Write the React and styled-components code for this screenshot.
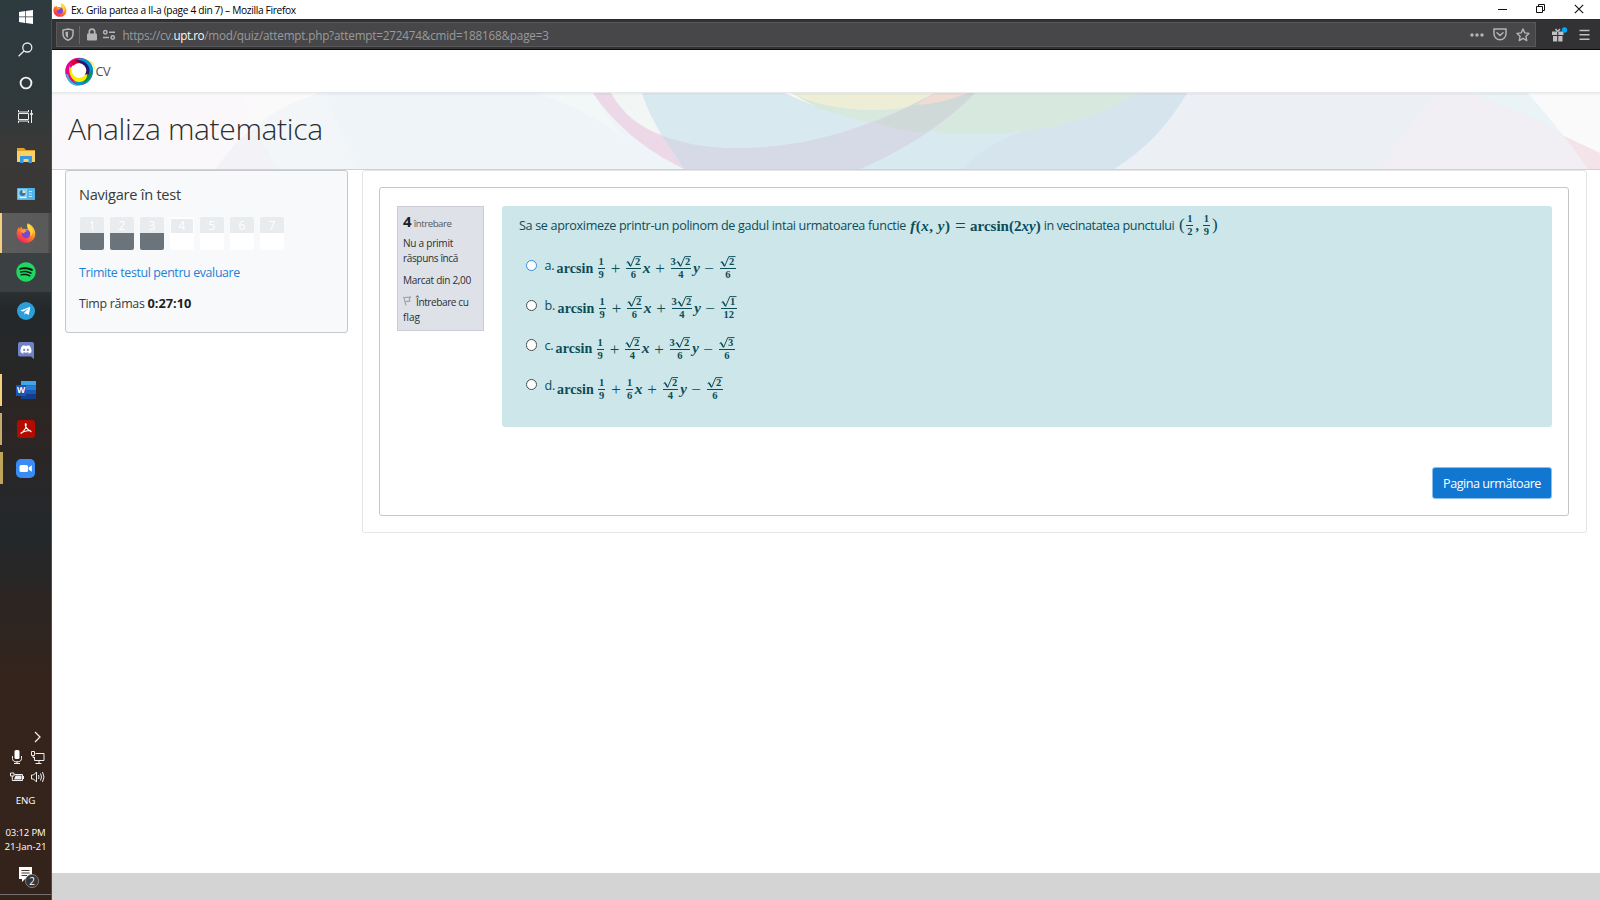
import React from "react";
import styled, { createGlobalStyle, css } from "styled-components";
import { FaSpotify, FaDiscord, FaTelegramPlane } from "react-icons/fa";

const Global = createGlobalStyle`
  * { box-sizing: border-box; }
  body { margin: 0; background: #fff; overflow: hidden; font-family: "Open Sans", "Noto Sans", sans-serif; color: #373a3c; }
`;

const Screen = styled.div`display: flex; width: 1600px; height: 900px; overflow: hidden;`;

const T = styled.span`
  white-space: pre;
  font-size: ${(p) => p.$s}px;
  letter-spacing: ${(p) => p.$ls || 0}px;
  font-weight: ${(p) => p.$b || 400};
  color: ${(p) => p.$c || "inherit"};
`;

/* ---------- taskbar ---------- */
const Taskbar = styled.aside`
  width: 52px; height: 900px; flex: none; display: flex; flex-direction: column;
  border-right: 1px solid #4c4c4c;
  background: linear-gradient(#2d3a3f 0, #2f393c 90px, #3a3938 150px, #3a3837 200px, #33393b 270px, #24282b 310px, #272727 370px, #2d2523 425px, #272729 490px, #23282b 530px, #2b2523 600px, #35241c 680px, #33231b 900px);
`;
const SysItem = styled.div`height: 33.3px; display: flex; align-items: center; justify-content: center; svg { display: block; }`;
const Apps = styled.div`padding-top: 2px; display: flex; flex-direction: column;`;
const AppItem = styled.div`
  height: 39.15px; flex: none; display: flex; align-items: center; justify-content: center;
  border-left: ${(p) => p.$bw || 0}px solid ${(p) => p.$bar || "transparent"};
  padding-right: ${(p) => p.$bw || 0}px;
  background: ${(p) => p.$bg || "transparent"};
  background-clip: padding-box;
  ${(p) => p.$short && css`height: 32px; margin: 3.6px 0;`}
  svg { display: block; }
`;
const Spacer = styled.div`flex: 1;`;
const Tray = styled.div`display: flex; flex-direction: column; height: 174px;`;
const TrayChevron = styled.div`height: 21px; padding: 5px 0 0 33px; svg { display: block; }`;
const TrayRow = styled.div`height: 20px; display: flex; align-items: center; justify-content: space-between; padding: 0 6px 0 10px; svg { display: block; }`;
const TrayText = styled.div`height: 14px; line-height: 14px; color: #fff; margin-top: ${(p) => p.$mt || 0}px; display: flex; justify-content: center;`;
const Notif = styled.div`margin-top: 13px; padding-left: 18px; height: 28px; border-bottom: 1px solid #77706c; svg { display: block; }`;

/* ---------- browser ---------- */
const Browser = styled.div`flex: 1; display: flex; flex-direction: column; min-width: 0;`;
const TitleBar = styled.div`
  height: 19px; display: flex; align-items: center; padding: 0 16px 0 1px; gap: 4px; color: #000; line-height: 18px;
  svg { display: block; flex: none; }
`;
const WinButtons = styled.div`margin-left: auto; display: flex; gap: 28px; align-items: center; height: 17px; padding-bottom: 2px;`;
const Toolbar = styled.div`height: 31px; background: #323234; border-top: 1px solid #2a2a2b; border-bottom: 1px solid #0c0c0d; display: flex; align-items: center; padding: 0 10px 0 4px;`;
const UrlField = styled.div`
  width: 1480px; height: 25px; background: #474749; border: 1px solid #58585a; display: flex; align-items: center; padding: 0 5px; color: #9a9a9c; line-height: 22px;
  svg { display: block; flex: none; }
`;
const Divider = styled.i`width: 1px; height: 18px; background: #68686b; margin: 0 6px 0 5px;`;
const Url = styled.div`margin-left: 6.5px; display: flex; flex: 1;`;
const UrlIcons = styled.div`display: flex; gap: 9px; align-items: center;`;
const ToolIcons = styled.div`display: flex; align-items: center; gap: 11px; margin-left: auto; svg { display: block; }`;

/* ---------- page ---------- */
const Nav = styled.div`height: 42px; display: flex; align-items: center; padding: 1px 0 0 12px; svg { display: block; } span { margin: -2px 0 0 -0.5px; }`;
const Banner = styled.header`
  height: 78px; border-top: 1px solid #e6e7e8; border-bottom: 1px solid #cfd1d3; display: grid; overflow: hidden;
  > * { grid-area: 1 / 1; }
  svg { display: block; }
`;
const Heading = styled.h1`margin: 0; padding: 12px 0 0 16px; line-height: 46px; font-weight: 300; color: #2b2e30; z-index: 1; height: 60px;`;
const Columns = styled.div`display: flex; align-items: flex-start; padding-left: 13px; gap: 14px; flex: 1;`;
const Block = styled.section`width: 283px; height: 163px; border: 1px solid #c6c8ca; border-radius: 3px; background: #f8f9fb; padding: 11px 13px; display: flex; flex-direction: column;`;
const Line = styled.div`height: ${(p) => p.$h}px; line-height: ${(p) => p.$h}px; margin-top: ${(p) => p.$mt || 0}px; display: flex; white-space: pre; align-items: baseline;`;
const NavButtons = styled.div`display: flex; gap: 6px; margin: 11px 0 0 1px; height: 33px; align-items: flex-end;`;
const QBtn = styled.div`
  width: 24px; height: 33px; display: flex; flex-direction: column; border-radius: 2px; overflow: hidden;
  ${(p) => p.$current && css`border: 1px solid #fff; border-top-width: 2px;`}
`;
const QNum = styled.div`height: ${(p) => (p.$current ? 14 : 16)}px; background: #e9ecef; color: #fff; font-size: 12px; line-height: ${(p) => (p.$current ? 14 : 18)}px; text-align: center;`;
const QState = styled.div`flex: 1; background: ${(p) => (p.$done ? "#6b737b" : "#fff")};`;

const Card = styled.main`width: 1225px; height: 363px; border: 1px solid #e3e5e7; border-radius: 3px; padding: 16px 17px 16px 16px;`;
const Inner = styled.div`height: 329px; border: 1px solid #c4c6c8; border-radius: 3px; padding: 18px 16px 16px 17px; display: grid; grid-template-columns: 87px 1fr; column-gap: 18px; grid-template-rows: 221px 1fr;`;
const Info = styled.div`height: 125px; border: 1px solid #cacdd5; background: #dee2e8; padding: 4px 0 0 5px; color: #2c2f33;`;
const Question = styled.div`background: #cde6ea; border-radius: 3px; color: #0c4c57; padding: 9px 0 0 17px;`;
const Stem = styled.div`height: 22px; display: flex; align-items: center; line-height: 22px; white-space: pre;`;
const Answers = styled.div`padding: 12px 0 0 6px;`;
const Answer = styled.div`height: 40.3px; display: flex; align-items: center;`;
const Radio = styled.i`width: 11.5px; height: 11.5px; border-radius: 50%; border: 1px solid ${(p) => (p.$active ? "#2a8fe8" : "#4c4c4f")}; background: #fff; margin: 0 7.5px ${(p) => p.$up}px 0.5px;`;
const Letter = styled.div`width: ${(p) => p.$w}px; margin-bottom: ${(p) => p.$up}px; line-height: 20px;`;
const Foot = styled.div`grid-column: 1 / 3; display: flex; justify-content: flex-end; align-items: flex-end;`;
const NextButton = styled.button`width: 120px; height: 32px; border: 1px solid #8dbdea; border-radius: 3px; background: #1177d1; color: #fff; font-family: inherit; padding: 0; display: flex; align-items: center; justify-content: center;`;
const StatusStrip = styled.footer`height: 27px; background: #d4d4d4; flex: none;`;

/* ---------- formulas ---------- */
const Formula = styled.div`display: flex; align-items: center; height: 26px; margin-left: ${(p) => p.$ml || 0}px; font-family: "Liberation Serif", serif; font-weight: 700; font-size: 14px; line-height: 14px;`;
const Sym = styled.span`
  width: ${(p) => p.$w}px; margin-left: ${(p) => p.$ml || 0}px; white-space: pre; display: flex; justify-content: center;
  font-size: ${(p) => p.$s || 14}px; font-style: ${(p) => (p.$i ? "italic" : "normal")}; font-weight: ${(p) => p.$b || 700};
  padding-bottom: ${(p) => p.$up || 0}px; letter-spacing: ${(p) => p.$ls || 0}px;
`;
const FracBox = styled.span`
  width: ${(p) => p.$w}px; margin-left: ${(p) => p.$ml || 0}px; display: flex; flex-direction: column; align-items: center; font-size: 10.5px; line-height: 10px;
`;
const Over = styled.span`height: 12px; width: 100%; display: flex; justify-content: center; align-items: flex-end; padding-bottom: 1px; border-bottom: 1px solid currentColor;`;
const Under = styled.span`height: 12px; padding-top: 1px; display: flex;`;
const RootSvg = styled.svg`display: block; width: 15.5px; height: 11px; flex: none;`;

const Root = ({ n }) => (
  <RootSvg viewBox="0 0 15.5 11">
    <path d="M.6 6.6 2 5.6 4.6 10.4 8.8.6H15.5" fill="none" stroke="currentColor" strokeWidth=".95" />
    <path d="M2 5.8 4.4 10" stroke="currentColor" strokeWidth="1.5" />
    <text x="9" y="9.4" fontSize="10.5" fontWeight="700" fill="currentColor" fontFamily="Liberation Serif, serif">{n}</text>
  </RootSvg>
);
const Frac = ({ a, b, r, w, ml }) => (
  <FracBox $w={w} $ml={ml}>
    <Over>{a}{r && <Root n={r} />}</Over>
    <Under>{b}</Under>
  </FracBox>
);

const ANSWERS = [
  { l: "a.", lw: 12, ru: 7, lu: 8, x: { r: 2, b: 6, w: 15.5 }, y: { a: 3, r: 2, b: 4, w: 20.5 }, z: { r: 2, b: 6 }, active: true },
  { l: "b.", lw: 13, ru: 8, lu: 8, x: { r: 2, b: 6, w: 15.5 }, y: { a: 3, r: 2, b: 4, w: 20.5 }, z: { r: 1, b: 12 } },
  { l: "c.", lw: 11, ru: 9, lu: 9, x: { r: 2, b: 4, w: 15.5 }, y: { a: 3, r: 2, b: 6, w: 20.5 }, z: { r: 3, b: 6 } },
  { l: "d.", lw: 12.5, ru: 11, lu: 10, x: { a: 1, b: 6, w: 7 }, y: { r: 2, b: 4, w: 15.5 }, z: { r: 2, b: 6 } },
];

const AnswerRow = ({ q }) => (
  <Answer>
    <Radio $active={q.active} $up={q.ru} />
    <Letter $w={q.lw} $up={q.lu}><T $s={12.6} $ls={-0.3}>{q.l}</T></Letter>
    <Formula>
      <Sym $w={37} $up={1} $ls={0.1}>arcsin</Sym>
      <Frac a="1" b="9" w={7} ml={4} />
      <Sym $w={10} $ml={6} $s={17} $b={400}>+</Sym>
      <Frac {...q.x} ml={5} />
      <Sym $w={8} $ml={1.5} $i $s={15.5} $up={2.5}>x</Sym>
      <Sym $w={10} $ml={4.5} $s={17} $b={400}>+</Sym>
      <Frac {...q.y} ml={5.5} />
      <Sym $w={8} $ml={1.5} $i $s={15} $up={2.5}>y</Sym>
      <Sym $w={10} $ml={3.5} $s={17} $b={400}>−</Sym>
      <Frac {...q.z} w={15.5} ml={6} />
    </Formula>
  </Answer>
);

/* ---------- drawings ---------- */
const Firefox = ({ s }) => (
  <svg width={s} height={s} viewBox="0 0 20 20">
    <defs>
      <linearGradient id="ff" x1=".85" y1="0" x2=".2" y2="1"><stop offset="0" stopColor="#ffe63d" /><stop offset=".4" stopColor="#ff9a26" /><stop offset=".75" stopColor="#ff4a3c" /><stop offset="1" stopColor="#e61f75" /></linearGradient>
    </defs>
    <path d="M12.3.3C16 2.4 19.6 6.4 19.3 11.5 18.9 16.6 14.8 19.8 10 19.8 4.6 19.8.6 15.8.6 10.7.6 7.5 1.7 5.6 3 3.9L3.6 6 5.6 3.6 6.3 6C8 5.5 10 5.6 11.5 6.3Z" fill="url(#ff)" />
    <circle cx="10" cy="11" r="4.3" fill="#7a45d8" />
    <path d="M4.8 8.2C6 6.7 8 6.5 9.6 7.3L11 8C9.8 8.9 8.2 9 8.2 10.4 7 10 5.5 9.5 4.8 8.2Z" fill="#ff9b2a" />
    <path d="M11.5.5C10.2 3.3 12 5.4 13.6 7.3 15 9 15 11.6 13.9 13.3 16.8 12 17.6 8.5 16.3 5.8 15.3 3.6 12.7 2.5 11.5.5Z" fill="#ffdc3a" />
  </svg>
);
const Swirl = () => (
  <svg width="32" height="32" viewBox="0 0 32 32">
    <circle cx="15" cy="15.5" r="11.3" fill="none" stroke="#ec008c" strokeWidth="5" />
    <path d="M7 6A13.5 13.5 0 0 1 24 5L20 9A9 9 0 0 0 9 10Z" fill="#e3002b" />
    <path d="M13 3C20 0 30 6 29 15A14 14 0 0 1 13 29L9 25C20 26 25 18 22 12 20 7 17 5 13 3Z" fill="#0097cf" />
    <path d="M11 4.5C21 3 27.5 10 25 18 23 21 20 22 18 23 24 16 20 8 11 4.5Z" fill="#28166f" />
    <path d="M19 24C23 22 26 18 28 13 29 19 25 25 19 27Z" fill="#009246" />
    <path d="M23 4C28 4 32 9 30.5 14 30 9 27 6 23 4Z" fill="#fff04a" />
    <path d="M2 18C3 25 7 30 15 30 9 27 5 24 4 18Z" fill="#36b5df" />
    <path d="M5.5 10C4 18 8 26 15.5 26 20 26 23 23 23.5 18L16 20 8 14Z" fill="#ffed00" />
    <circle cx="15" cy="14.6" r="7.3" fill="#fff" />
  </svg>
);
const BannerArt = () => (
  <svg width="1548" height="76" viewBox="52 93 1548 76">
    <rect x="52" y="93" width="1548" height="76" fill="#f9fafb" />
    <path d="M52 93H244L278 169H52Z" fill="#faf8fa" />
    <path d="M318 93H700V169H216C240 135 275 110 318 93Z" fill="#eef4f8" />
    <path d="M244 93H318C285 107 262 121 252 128Z" fill="#fafafa" />
    <path d="M216 169C228 151 240 138 254 128L278 169Z" fill="#f2f2f7" />
    <path d="M254 128C275 109 300 98 325 93C336 120 346 145 358 169H278Z" fill="#f2f6f8" />
    <path d="M535 93H594C605 115 618 133 634 146C605 122 570 103 535 93Z" fill="#f2f7f8" />
    <path d="M1186 93H1600V169H1100Z" fill="#eeeff4" />
    <path d="M1430 93H1600V169H1375C1400 140 1410 120 1430 93Z" fill="#f1eff4" />
    <path d="M1187 93H1435C1415 120 1400 145 1375 169H1115Z" fill="#eceff4" />
    <path d="M1470 93H1530L1564 136C1535 116 1500 104 1470 93Z" fill="#eaf3f6" />
    <path d="M1528 93H1600V153L1564 136Z" fill="#fafafb" />
    <path d="M1564 136 1600 153V169H1588Z" fill="#f5e3ea" />
    <path d="M611 93H642L661 135C636 125 622 110 611 93Z" fill="#f2f7f6" />
    <path d="M593 93H611C622 113 638 126 661 135L684 169C645 150 615 125 593 93Z" fill="#ecd8e6" />
    <path d="M642 93H1187C1168 125 1145 150 1114 169H684C668 145 650 120 642 93Z" fill="#d9e9f0" />
    <path d="M1187 93C1168 125 1145 150 1114 169H963C985 145 1015 132 1050 123 1090 115 1120 105 1137 93Z" fill="#d6e4ee" />
    <path d="M784 93H1137C1095 122 1035 134 970 134 890 132 825 115 784 93Z" fill="#d7e9df" />
    <path d="M784 93H792C800 98 808 103 817 107Z" fill="#f8f8f4" />
    <path d="M792 93H945C930 106 900 110 873 110 840 110 810 103 792 93Z" fill="#eeeed6" />
    <path d="M661 135C685 145 715 149 745 148 820 146 880 122 935 93H975C945 125 900 152 860 169H684Z" fill="#d6dae7" />
    <path d="M874 122C900 112 918 103 935 93H975C960 108 944 121 925 132 905 132 885 126 874 122Z" fill="#ced9d8" />
    <path d="M935 93H968C950 100 935 104 915 105Z" fill="#f0dcd2" />
    <rect x="52" y="93" width="1548" height="2" fill="#5a6a72" opacity=".05" />
  </svg>
);

export default function App() {
  return (
    <Screen>
      <Global />
      <Taskbar>
        <SysItem><svg width="14" height="14" viewBox="0 0 14 14" fill="#fff"><path d="M0 2 6 1.1V6.6H0ZM6.7 1 14 0V6.6H6.7ZM0 7.3H6V12.9L0 12ZM6.7 7.3H14V14L6.7 13Z" /></svg></SysItem>
        <SysItem><svg width="15" height="15" viewBox="0 0 15 15" fill="none" stroke="#e8eaea" strokeWidth="1.3"><circle cx="9.3" cy="5.5" r="4.5" /><path d="M6.2 8.8.6 14.3" /></svg></SysItem>
        <SysItem><svg width="14" height="14" viewBox="0 0 14 14" fill="none" stroke="#f2f2f2" strokeWidth="1.9"><circle cx="7" cy="7" r="5.4" /></svg></SysItem>
        <SysItem><svg width="15" height="13" viewBox="0 0 15 13" fill="none" stroke="#eee" strokeWidth="1"><path d="M.5 3.5H10.5V9.5H.5ZM.5 0V2M10.5 0V2H.5M.5 13V11H10.5V13M13.5 0V13" /><path d="M12.2 4H14.8" strokeWidth="2" /></svg></SysItem>
        <Apps>
          <AppItem><svg width="18" height="16" viewBox="0 0 18 16"><path d="M0 1H7L9 3H18V15H0Z" fill="#e0a02c" /><path d="M0 4H18V15H0Z" fill="#fbd163" /><path d="M3 9H15V16H11.5V12H6.5V16H3Z" fill="#3a96dd" /></svg></AppItem>
          <AppItem><svg width="18" height="12" viewBox="0 0 18 12"><rect width="18" height="12" rx=".8" fill="#52b4e8" /><rect x="1" y="1" width="9" height="9.5" fill="#8ed2f2" /><circle cx="5.5" cy="5" r="3" fill="#2a7ab8" /><path d="M5.5 5V2A3 3 0 0 1 8.5 5Z" fill="#f6e7a5" /><path d="M3 9.5H9" stroke="#fff" /><path d="M12 3.5H15M12 6H15M12 8.5H15" stroke="#c9ecfa" strokeWidth=".9" /></svg></AppItem>
          <AppItem $bw={2} $bar="#f4cf7c" $bg="linear-gradient(90deg,#5d5d5d,#595959 46px,#4a4a4a 47px)"><Firefox s={20} /></AppItem>
          <AppItem $bg="#3b4143"><svg width="20" height="20" viewBox="0 0 20 20"><circle cx="10" cy="10" r="9" fill="#0b1a10" /><FaSpotify size={20} color="#1ed760" /></svg></AppItem>
          <AppItem><svg width="18" height="18" viewBox="0 0 18 18"><circle cx="9" cy="9" r="9" fill="#2a9fda" /><FaTelegramPlane x="3" y="3.5" size={11} color="#fff" /></svg></AppItem>
          <AppItem><svg width="16" height="17" viewBox="0 0 16 17"><path d="M2 0H14A2 2 0 0 1 16 2V17L13 14.5H2A2 2 0 0 1 0 12.5V2A2 2 0 0 1 2 0Z" fill="#7083c8" /><FaDiscord x="2" y="1.5" size={12} color="#fff" /></svg></AppItem>
          <AppItem $short $bw={2} $bar="#f4cf7c"><svg width="20" height="18" viewBox="0 0 20 18"><path d="M5 0H20V4.5H5Z" fill="#41a5ee" /><path d="M5 4.5H20V9H5Z" fill="#2b7cd3" /><path d="M5 9H20V13.5H5Z" fill="#185abd" /><path d="M5 13.5H20V18H5Z" fill="#103f91" /><rect y="4" width="10" height="11" fill="#1a56b5" /><text x="5" y="12.3" textAnchor="middle" fontSize="8.5" fontWeight="700" fill="#fff" fontFamily="Open Sans, sans-serif">W</text></svg></AppItem>
          <AppItem $short $bw={2} $bar="#c3ac6e"><svg width="18" height="18" viewBox="0 0 18 18"><rect width="18" height="18" rx="3" fill="#b30b00" /><path d="M8.3 4C8 6 9.5 9 14 11.6 14.5 10 8 10.5 4 13 3.5 14.5 9.5 9.5 9.2 4.5 9.2 3.5 8.4 3.5 8.3 4Z" fill="none" stroke="#fff" strokeWidth="1.1" /></svg></AppItem>
          <AppItem $short $bw={3} $bar="#bfa45c"><svg width="19" height="19" viewBox="0 0 19 19"><rect width="19" height="19" rx="5" fill="#3b8bf4" /><rect x="3.5" y="6" width="8.5" height="7" rx="1.5" fill="#fff" /><path d="M12.6 8.5 15.8 6.3V12.7L12.6 10.5Z" fill="#fff" /></svg></AppItem>
        </Apps>
        <Spacer />
        <Tray>
          <TrayChevron><svg width="8" height="12" viewBox="0 0 8 12" fill="none" stroke="#eee" strokeWidth="1.3"><path d="M2 1 7 6 2 11" /></svg></TrayChevron>
          <TrayRow>
            <svg width="14" height="14" viewBox="0 0 14 14" fill="none" stroke="#eee"><rect x="4.5" y="0" width="5" height="9" rx="1.5" fill="#fff" stroke="none" /><path d="M2.5 6V8.5A4 3 0 0 0 11.5 8.5V6M7 11V13.5M4 13.5H10" /></svg>
            <svg width="14" height="13" viewBox="0 0 14 13" fill="none" stroke="#eee"><path d="M4.500 2.5H13V9.5H3.5V6M8 9.5V12M4.5 12.5H10.5M.5.5H3.5V4.5H.5ZM2 4.5V6.5H4" /></svg>
          </TrayRow>
          <TrayRow>
            <svg width="14" height="10" viewBox="0 0 14 10" fill="none" stroke="#eee"><path d="M4.5 2.5H12.5V8.5H3M13.5 4V7M.5 1H4V4H.5ZM2.3 4V8.5H4" /><path d="M5.5 3.5H11.5V7.5H4Z" fill="#eee" stroke="none" /></svg>
            <svg width="14" height="12" viewBox="0 0 14 12" fill="none" stroke="#eee"><path d="M.5 4H2.5L5.5 1V11L2.5 8H.5ZM7.5 4Q8.5 6 7.5 8M9.5 2.5Q11.5 6 9.5 9.5M11.5 1Q14.5 6 11.5 11" /></svg>
          </TrayRow>
          <TrayText $mt={7}><T $s={9.8} $ls={-0.17}>ENG</T></TrayText>
          <TrayText $mt={18}><T $s={9.6} $ls={-0.17}>03:12 PM</T></TrayText>
          <TrayText><T $s={9.8} $ls={-0.09}>21-Jan-21</T></TrayText>
          <Notif><svg width="22" height="22" viewBox="0 0 22 22"><path d="M1 0H14V12H7L4 15V12H1Z" fill="#fff" /><path d="M3.5 3.5H11.5M3.5 6H11.5M3.5 8.5H9" stroke="#33231b" strokeWidth=".9" /><circle cx="14" cy="14" r="6.6" fill="#33373a" stroke="#8b8b8b" strokeWidth=".8" /><text x="14" y="17.5" textAnchor="middle" fontSize="10" fill="#fff" fontFamily="Open Sans, sans-serif">2</text></svg></Notif>
        </Tray>
      </Taskbar>

      <Browser>
        <TitleBar>
          <Firefox s={14} />
          <T $s={10.2} $ls={-0.333}>Ex. Grila partea a II-a (page 4 din 7) – Mozilla Firefox</T>
          <WinButtons>
            <svg width="10" height="10" viewBox="0 0 10 10"><path d="M0 5.5H9" stroke="#111" /></svg>
            <svg width="10" height="10" viewBox="0 0 10 10" fill="none" stroke="#111"><path d="M.5 2.5H6.5V8.5H.5ZM2.5 2.5V.5H8.5V6.5H6.5" /></svg>
            <svg width="10" height="10" viewBox="0 0 10 10"><path d="M.8.8 9.2 9.2M9.2.8.8 9.2" stroke="#111" strokeWidth="1.1" /></svg>
          </WinButtons>
        </TitleBar>
        <Toolbar>
          <UrlField>
            <svg width="12" height="13" viewBox="0 0 12 13"><path d="M6 .9 11 2V6C11 9.2 9 11.2 6 12.2 3 11.2 1 9.2 1 6V2Z" fill="none" stroke="#b4b4b6" strokeWidth="1.5" /><path d="M6 3.5V9.8C4.3 9 3.5 8 3.5 6V4Z" fill="#b4b4b6" /></svg>
            <Divider />
            <svg width="12" height="13" viewBox="0 0 12 13"><rect x="1" y="5.5" width="10" height="7" rx="1" fill="#b4b4b6" /><path d="M3.3 6V3.8A2.7 2.7 0 0 1 8.7 3.8V6" fill="none" stroke="#b4b4b6" strokeWidth="1.7" /></svg>
            <svg width="18" height="12" viewBox="-5 0 18 12" fill="none" stroke="#b4b4b6" strokeWidth="1.5"><circle cx="2.3" cy="3.2" r="1.7" /><path d="M6 3.2H12M0 8.5H6" /><circle cx="9.7" cy="8.5" r="1.7" /></svg>
            <Url>
              <T $s={11.7} $ls={-0.31}>https://cv.</T><T $s={11.7} $ls={-0.45} $c="#f9f9fa">upt.ro</T><T $s={11.7} $ls={-0.176}>/mod/quiz/attempt.php?attempt=272474&amp;cmid=188168&amp;page=3</T>
            </Url>
            <UrlIcons>
              <svg width="14" height="4" viewBox="0 0 14 4" fill="#b4b4b6"><circle cx="2" cy="2" r="1.7" /><circle cx="7" cy="2" r="1.7" /><circle cx="12" cy="2" r="1.7" /></svg>
              <svg width="14" height="13" viewBox="0 0 14 13" fill="none" stroke="#b4b4b6" strokeWidth="1.5" strokeLinecap="round"><path d="M1 1H13V5.8A6 6 0 0 1 1 5.8ZM4 4.8 7 7.5 10 4.8" /></svg>
              <svg width="14" height="14" viewBox="0 0 14 14" fill="none" stroke="#b4b4b6" strokeWidth="1.4" strokeLinejoin="round"><path d="M7 1 8.8 4.9 13 5.4 9.9 8.2 10.7 12.6 7 10.4 3.3 12.6 4.1 8.2 1 5.4 5.2 4.9Z" /></svg>
            </UrlIcons>
          </UrlField>
          <ToolIcons>
            <svg width="16" height="15" viewBox="0 0 16 15"><path d="M0 4.5H5.2V8H0ZM6.3 4.5H11.5V8H6.3ZM1 9H5.2V14.5H1ZM6.3 9H10.5V14.5H6.3Z" fill="#c0c0c2" /><path d="M5.7 4.5 3.5 2M5.7 4.5 8 2" stroke="#c0c0c2" strokeWidth="1.5" /><circle cx="12.5" cy="3" r="2.7" fill="#00a8f8" /></svg>
            <svg width="11" height="12" viewBox="0 0 11 12" stroke="#c0c0c2" strokeWidth="1.6"><path d="M.5 1.5H10.5M.5 5.8H10.5M.5 10.2H10.5" /></svg>
          </ToolIcons>
        </Toolbar>

        <Nav><Swirl /><T $s={12.8} $ls={-0.6} $c="#4b4f52">CV</T></Nav>
        <Banner>
          <BannerArt />
          <Heading><T $s={30} $b={300} $ls={-0.35}>Analiza matematica</T></Heading>
        </Banner>

        <Columns>
          <Block>
            <Line $h={24}><T $s={14.6} $ls={-0.256}>Navigare în test</T></Line>
            <NavButtons>
              {[1, 2, 3, 4, 5, 6, 7].map((n) => (
                <QBtn key={n} $current={n === 4}><QNum $current={n === 4}>{n}</QNum><QState $done={n < 4} /></QBtn>
              ))}
            </NavButtons>
            <Line $h={20} $mt={13}><T $s={12.4} $ls={-0.368} $c="#1f80d8">Trimite testul pentru evaluare</T></Line>
            <Line $h={20} $mt={10}><T $s={12.4} $ls={-0.29}>Timp rămas </T><T $s={12.8} $b={700} $c="#1d2125">0:27:10</T></Line>
          </Block>

          <Card>
            <Inner>
              <Info>
                <Line $h={20}><T $s={15} $b={700} $c="#1d2125">4</T><T $s={9.7} $ls={-0.45} $c="#555a60"> întrebare</T></Line>
                <Line $h={15} $mt={5}><T $s={10.1} $ls={-0.27}>Nu a primit</T></Line>
                <Line $h={15}><T $s={10.1} $ls={-0.39}>răspuns încă</T></Line>
                <Line $h={15} $mt={6.5}><T $s={10.1} $ls={-0.33}>Marcat din 2,00</T></Line>
                <Line $h={15} $mt={7.5}>
                  <svg width="13" height="10" viewBox="0 0 13 10"><path d="M.7.7 3 9.5M1.5 1.5 8 1 6 3 7 5.2 2.500 5.5" fill="none" stroke="#8b9096" strokeWidth=".9" /></svg>
                  <T $s={10.1} $ls={-0.43}>Întrebare cu</T>
                </Line>
                <Line $h={15}><T $s={10.1}>flag</T></Line>
              </Info>
              <Question>
                <Stem>
                  <T $s={12.6} $ls={-0.335}>Sa se aproximeze printr-un polinom de gadul intai urmatoarea functie </T>
                  <Formula $ml={-0.7}>
                    <Sym $w={44} $s={15} $up={1} $ls={0.5}><i>f</i>(<i>x</i>, <i>y</i>)</Sym>
                    <Sym $w={12} $ml={2} $s={19} $b={400}>=</Sym>
                    <Sym $w={71} $ml={3.5} $s={15} $up={1}>arcsin(2<i>xy</i>)</Sym>
                  </Formula>
                  <T $s={12.6} $ls={-0.4}> in vecinatatea punctului </T>
                  <Formula $ml={1.5}>
                    <Sym $w={6} $s={17} $b={400} $up={2}>(</Sym>
                    <Frac a="1" b="2" w={7} ml={1.5} />
                    <Sym $w={4} $ml={2}>,</Sym>
                    <Frac a="1" b="9" w={7} ml={3.5} />
                    <Sym $w={6} $ml={2} $s={17} $b={400} $up={2}>)</Sym>
                  </Formula>
                </Stem>
                <Answers>{ANSWERS.map((q) => <AnswerRow key={q.l} q={q} />)}</Answers>
              </Question>
              <Foot><NextButton><T $s={12.6} $ls={-0.47}>Pagina următoare</T></NextButton></Foot>
            </Inner>
          </Card>
        </Columns>
        <StatusStrip />
      </Browser>
    </Screen>
  );
}
